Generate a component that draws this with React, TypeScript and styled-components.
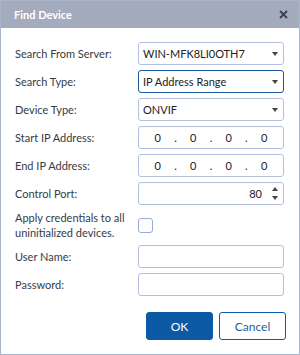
import React from "react";
import styled, { createGlobalStyle } from "styled-components";

const Global = createGlobalStyle`
  html, body { margin: 0; padding: 0; background: #ffffff; }
  body { font-family: Lato, "Noto Sans", sans-serif; }
`;

const Dialog = styled.div`
  width: 298px;
  height: 353px;
  border: 1px solid #aab4cb;
  background: #ffffff;
  display: flex;
  flex-direction: column;
`;

const TitleBar = styled.div`
  height: 27px;
  background: #a3abbd;
  display: flex;
  align-items: center;
  justify-content: space-between;
  padding: 0 11px 0 13px;
  color: #ffffff;
  font-weight: 700;
  font-size: 11px;
`;

const Form = styled.div`
  display: grid;
  grid-template-columns: 123px 146px;
  row-gap: 5px;
  padding: 14px 0 0 14px;
  align-items: center;
`;

const Label = styled.div`
  font-size: 11px;
  color: #363b44;
  line-height: 15px;
  white-space: nowrap;
`;

const Box = styled.div<{ $focused?: boolean }>`
  height: 23px;
  box-sizing: border-box;
  border: 1px solid ${(p) => (p.$focused ? "#1a5a9c" : "#b4c0de")};
  border-radius: 3px;
  display: flex;
  align-items: center;
  font-size: 11px;
  color: #222;
  padding: 0 5px 0 4px;
`;

const SelectText = styled.span`
  flex: 1;
`;

const Caret = styled.span`
  width: 0;
  height: 0;
  border-left: 3px solid transparent;
  border-right: 3px solid transparent;
  border-top: 4px solid #444;
`;

const IpBox = styled(Box)`
  justify-content: space-around;
  padding: 0 9px 0 9px;
`;

const Spin = styled.div`
  display: flex;
  flex-direction: column;
  gap: 5px;
  margin-left: 10px;
`;

const Up = styled.span`
  width: 0;
  height: 0;
  border-left: 3px solid transparent;
  border-right: 3px solid transparent;
  border-bottom: 4px solid #444;
`;

const Down = styled(Caret)``;

const PortText = styled.span`
  flex: 1;
  text-align: right;
`;

const CheckWrap = styled.div`
  display: flex;
  align-items: center;
`;

const Check = styled.div`
  width: 15px;
  height: 15px;
  box-sizing: border-box;
  border: 1px solid #9aaad0;
  border-radius: 3px;
`;

const Buttons = styled.div`
  display: flex;
  justify-content: flex-end;
  gap: 6px;
  padding: 16px 13px 0 0;
`;

const Button = styled.button<{ $primary?: boolean }>`
  width: 67px;
  height: 28px;
  box-sizing: border-box;
  border-radius: 3px;
  border: 1px solid #0c5aa6;
  background: ${(p) => (p.$primary ? "#0c5aa6" : "#ffffff")};
  color: ${(p) => (p.$primary ? "#ffffff" : "#1f5f9f")};
  font-family: inherit;
  font-size: 12px;
  padding: 0;
`;

const Ip = () => (
  <IpBox>
    <span>0</span>
    <span>.</span>
    <span>0</span>
    <span>.</span>
    <span>0</span>
    <span>.</span>
    <span>0</span>
  </IpBox>
);

export default function App() {
  return (
    <>
      <Global />
      <Dialog>
        <TitleBar>
          <span>Find Device</span>
          <svg width="9" height="9" viewBox="0 0 9 9">
            <path d="M1 1L8 8M8 1L1 8" stroke="#3a404c" strokeWidth="1.8" />
          </svg>
        </TitleBar>
        <Form>
          <Label>Search From Server:</Label>
          <Box>
            <SelectText>WIN-MFK8LI0OTH7</SelectText>
            <Caret />
          </Box>
          <Label>Search Type:</Label>
          <Box $focused>
            <SelectText>IP Address Range</SelectText>
            <Caret />
          </Box>
          <Label>Device Type:</Label>
          <Box>
            <SelectText>ONVIF</SelectText>
            <Caret />
          </Box>
          <Label>Start IP Address:</Label>
          <Ip />
          <Label>End IP Address:</Label>
          <Ip />
          <Label>Control Port:</Label>
          <Box>
            <PortText>80</PortText>
            <Spin>
              <Up />
              <Down />
            </Spin>
          </Box>
          <Label>
            Apply credentials to all
            <br />
            uninitialized devices.
          </Label>
          <CheckWrap>
            <Check />
          </CheckWrap>
          <Label>User Name:</Label>
          <Box />
          <Label>Password:</Label>
          <Box />
        </Form>
        <Buttons>
          <Button $primary>OK</Button>
          <Button>Cancel</Button>
        </Buttons>
      </Dialog>
    </>
  );
}
